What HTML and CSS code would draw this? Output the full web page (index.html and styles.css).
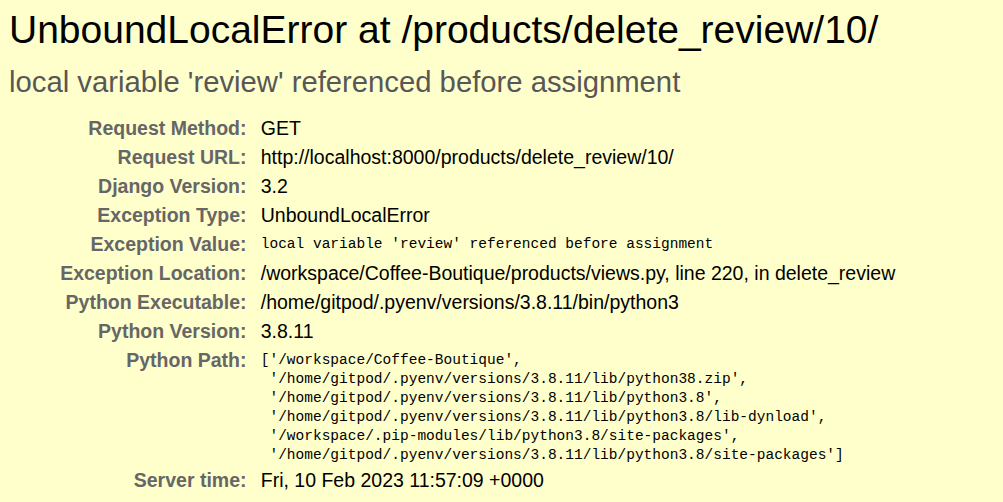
FILE: index.html
```html
<!DOCTYPE html>
<html lang="en">
<head>
<meta charset="utf-8">
<title>UnboundLocalError at /products/delete_review/10/</title>
<link rel="stylesheet" href="styles.css">
</head>
<body>
<div class="summary">
  <h1 class="title">UnboundLocalError at /products/delete_review/10/</h1>
  <pre class="exception-value">local variable 'review' referenced before assignment</pre>
  <table class="meta">
    <tbody>
      <tr><th>Request Method:</th><td>GET</td></tr>
      <tr><th>Request URL:</th><td>http://localhost:8000/products/delete_review/10/</td></tr>
      <tr><th>Django Version:</th><td>3.2</td></tr>
      <tr><th>Exception Type:</th><td>UnboundLocalError</td></tr>
      <tr><th>Exception Value:</th><td><pre class="code">local variable 'review' referenced before assignment</pre></td></tr>
      <tr><th>Exception Location:</th><td>/workspace/Coffee-Boutique/products/views.py, line 220, in delete_review</td></tr>
      <tr><th>Python Executable:</th><td>/home/gitpod/.pyenv/versions/3.8.11/bin/python3</td></tr>
      <tr><th>Python Version:</th><td>3.8.11</td></tr>
      <tr><th>Python Path:</th><td><pre class="code">['/workspace/Coffee-Boutique',
 '/home/gitpod/.pyenv/versions/3.8.11/lib/python38.zip',
 '/home/gitpod/.pyenv/versions/3.8.11/lib/python3.8',
 '/home/gitpod/.pyenv/versions/3.8.11/lib/python3.8/lib-dynload',
 '/workspace/.pip-modules/lib/python3.8/site-packages',
 '/home/gitpod/.pyenv/versions/3.8.11/lib/python3.8/site-packages']</pre></td></tr>
      <tr><th>Server time:</th><td>Fri, 10 Feb 2023 11:57:09 +0000</td></tr>
    </tbody>
  </table>
</div>
</body>
</html>
```

FILE: styles.css
```css
html, body {
  margin: 0;
  padding: 0;
  background: #ffffcc;
}

body {
  font-family: "Liberation Sans", Arial, sans-serif;
  color: #000;
}

.summary {
  padding: 8px 0 0 9px;
}

.title {
  margin: 0;
  font-size: 39px;
  font-weight: normal;
  line-height: normal;
}

.exception-value {
  margin: 14px 0 15px;
  font-family: "Liberation Sans", Arial, sans-serif;
  font-size: 29.25px;
  line-height: normal;
  color: #575757;
  white-space: pre-wrap;
}

.meta {
  border: none;
  border-collapse: collapse;
  background: transparent;
  font-size: 19.5px;
  line-height: 23px;
}

.meta th,
.meta td {
  vertical-align: top;
  padding: 3px 4.5px;
}

.meta th {
  width: 233px;
  text-align: right;
  color: #666;
  font-weight: bold;
  padding-right: 9.75px;
}

.code {
  margin: 0 0 -2px;
  padding-top: 2px;
  font-family: "Liberation Mono", "Courier New", monospace;
  font-size: 14.5px;
  line-height: 19px;
  white-space: pre-wrap;
}
```
